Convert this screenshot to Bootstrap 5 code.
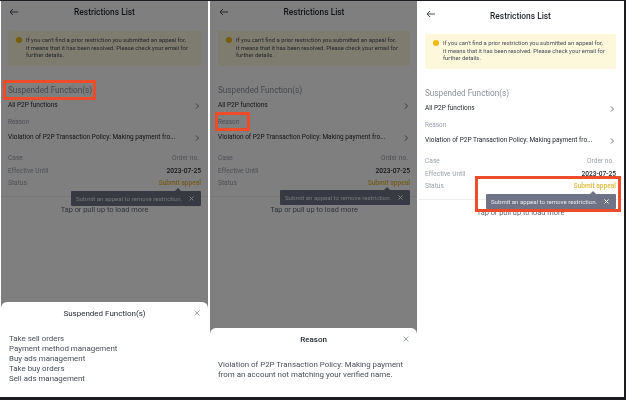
<!DOCTYPE html>
<html lang="en">
<head>
    <meta charset="UTF-8">
    <meta name="viewport" content="width=device-width, initial-scale=1.0">
    <title>Restrictions List</title>
    <link href="https://cdn.jsdelivr.net/npm/bootstrap@5.3.3/dist/css/bootstrap.min.css" rel="stylesheet">
    <style>
        html, body { height: 100%; }
        body {
            background: #1b1b22;
            overflow: hidden;
            font-family: "Roboto", "Noto Sans", sans-serif;
            color: #1e2329;
        }
        .shot-strip {
            width: 624px;
            height: 396px;
            margin-top: 1px;
            background: #fff;
            gap: 2px;
            filter: blur(.3px);
        }
        .phone {
            width: 207px;
            height: 100%;
            flex: none;
            background: #fff;
            padding: 2px 7px 0;
            overflow: hidden;
        }
        .phone-a { margin-left: 1px; }
        .phone-b { padding-left: 8px; }
        .phone-c { width: 205px; padding-top: 6px; margin-left: -1px; }
        .top-bar { height: 14px; line-height: 14px; margin-bottom: 14px; }
        .phone-c .top-bar { margin-bottom: 13px; }
        .top-bar svg { position: absolute; left: 1px; top: 5px; }
        .phone-c .top-bar svg { top: 3px; }
        .top-title { font-size: 8.4px; font-weight: 500; line-height: 14px; }
        .notice {
            background: #fdf8dc;
            border-radius: 2px;
            height: 35px;
            padding: 6px 8px 0 8px;
            font-size: 5.85px;
            line-height: 7.7px;
            color: #474d57;
            gap: 4px;
        }
        .notice-dot { width: 6px; height: 6px; border-radius: 50%; background: #f0b90b; flex: none; }
        .section-title { font-size: 8.2px; color: #8b929c; line-height: 10px; margin-top: 19px; }
        .item-row { font-size: 6.5px; line-height: 9px; margin-top: 6px; white-space: nowrap; }
        .item-row svg { margin-right: 2px; flex: none; }
        .sub-label { font-size: 6.4px; line-height: 9px; color: #9aa0aa; margin-top: 8px; }
        .row-case { margin-top: 12px; }
        .row-info { font-size: 6.6px; line-height: 9px; color: #9aa0aa; margin-bottom: 3.6px; }
        .row-info .val-dark { color: #1e2329; font-weight: 500; }
        .row-info .val-gold { color: #e0b93a; font-weight: 500; }
        .val-case { padding-right: 2px; }
        .hr-line { border-top: 1px solid #eaecef; margin: 8px -7px 0; }
        .load-more { font-size: 7.4px; line-height: 9px; color: #5e6673; margin-top: 8px; }
        .scrim { inset: 0; background: rgba(0, 0, 0, .5); z-index: 2; }
        .tip-box {
            right: 7px;
            width: 130px;
            height: 15px;
            background: #6e7386;
            color: #e6e8ee;
            border-radius: 1px;
            font-size: 6.1px;
            padding: 0 7px 0 5px;
            white-space: nowrap;
        }
        .tip-box::before {
            content: "";
            position: absolute;
            top: -3px;
            right: 20px;
            border-left: 3px solid transparent;
            border-right: 3px solid transparent;
            border-bottom: 3px solid #6e7386;
        }
        .tip-a { top: 190px; }
        .tip-b { top: 189px; }
        .tip-c { top: 193px; }
        .tip-dim { z-index: 1; }
        .sheet {
            left: 0;
            right: 0;
            bottom: 0;
            background: #fff;
            border-radius: 6px 6px 0 0;
            padding: 0 8px;
            z-index: 3;
        }
        .sheet-a { height: 95px; }
        .sheet-b { height: 69px; }
        .sheet-head { font-size: 8px; line-height: 10px; padding-top: 7px; }
        .sheet-b .sheet-head { font-weight: 500; }
        .sheet-head svg { position: absolute; right: 0; top: 8px; }
        .sheet-body { font-size: 7.9px; line-height: 10px; color: #474d57; margin-top: 15px; }
        .red-box { border: 3px solid #ee4b2b; z-index: 4; }
        .red-a { left: 2px; top: 79px; width: 93px; height: 20px; }
        .red-b { left: 5px; top: 111px; width: 35px; height: 19px; }
        .red-c { left: 57px; top: 175px; width: 146px; height: 36px; }
    </style>
</head>
<body>
    <div class="shot-strip d-flex">

        <!-- left screen -->
        <div class="phone phone-a position-relative">
            <div class="position-relative top-bar text-center">
                <svg width="9" height="8" viewBox="0 0 9 8" fill="none" stroke="#474d57" stroke-width="1"><path d="M9 4H1M4 1L1 4l3 3"/></svg>
                <span class="top-title">Restrictions List</span>
            </div>
            <div class="notice d-flex">
                <span class="notice-dot"></span>
                <div>If you can't find a prior restriction you submitted an appeal for,<br>it means that it has been resolved. Please check your email for<br>further details.</div>
            </div>
            <div class="section-title">Suspended Function(s)</div>
            <div class="item-row d-flex justify-content-between align-items-center">
                <span>All P2P functions</span>
                <svg width="4" height="6" viewBox="0 0 4 6" fill="none" stroke="#474d57" stroke-width=".8"><path d="M1 .5L3.5 3 1 5.5"/></svg>
            </div>
            <div class="sub-label">Reason</div>
            <div class="item-row d-flex justify-content-between align-items-center">
                <span>Violation of P2P Transaction Policy: Making payment fro...</span>
                <svg width="4" height="6" viewBox="0 0 4 6" fill="none" stroke="#474d57" stroke-width=".8"><path d="M1 .5L3.5 3 1 5.5"/></svg>
            </div>
            <div class="row-info row-case d-flex justify-content-between"><span>Case</span><span class="val-case">Order no.</span></div>
            <div class="row-info d-flex justify-content-between"><span>Effective Until</span><span class="val-dark">2023-07-25</span></div>
            <div class="row-info d-flex justify-content-between mb-0"><span>Status</span><span class="val-gold">Submit appeal</span></div>
            <div class="hr-line"></div>
            <div class="load-more text-center">Tap or pull up to load more</div>

            <div class="tip-box tip-a tip-dim position-absolute d-flex justify-content-between align-items-center">
                <span>Submit an appeal to remove restriction.</span>
                <svg width="5" height="5" viewBox="0 0 5 5" stroke="#fff" stroke-width="1"><path d="M.5.5l4 4M4.5.5l-4 4"/></svg>
            </div>
            <div class="scrim position-absolute"></div>
            <div class="sheet sheet-a position-absolute">
                <div class="sheet-head position-relative text-center">
                    Suspended Function(s)
                    <svg width="6" height="6" viewBox="0 0 6 6" stroke="#8b929c" stroke-width=".8"><path d="M.5.5l5 5M5.5.5l-5 5"/></svg>
                </div>
                <div class="sheet-body">
                    <div>Take sell orders</div>
                    <div>Payment method management</div>
                    <div>Buy ads management</div>
                    <div>Take buy orders</div>
                    <div>Sell ads management</div>
                </div>
            </div>
            <div class="red-box red-a position-absolute"></div>
        </div>

        <!-- middle screen -->
        <div class="phone phone-b position-relative">
            <div class="position-relative top-bar text-center">
                <svg width="9" height="8" viewBox="0 0 9 8" fill="none" stroke="#474d57" stroke-width="1"><path d="M9 4H1M4 1L1 4l3 3"/></svg>
                <span class="top-title">Restrictions List</span>
            </div>
            <div class="notice d-flex">
                <span class="notice-dot"></span>
                <div>If you can't find a prior restriction you submitted an appeal for,<br>it means that it has been resolved. Please check your email for<br>further details.</div>
            </div>
            <div class="section-title">Suspended Function(s)</div>
            <div class="item-row d-flex justify-content-between align-items-center">
                <span>All P2P functions</span>
                <svg width="4" height="6" viewBox="0 0 4 6" fill="none" stroke="#474d57" stroke-width=".8"><path d="M1 .5L3.5 3 1 5.5"/></svg>
            </div>
            <div class="sub-label">Reason</div>
            <div class="item-row d-flex justify-content-between align-items-center">
                <span>Violation of P2P Transaction Policy: Making payment fro...</span>
                <svg width="4" height="6" viewBox="0 0 4 6" fill="none" stroke="#474d57" stroke-width=".8"><path d="M1 .5L3.5 3 1 5.5"/></svg>
            </div>
            <div class="row-info row-case d-flex justify-content-between"><span>Case</span><span class="val-case">Order no.</span></div>
            <div class="row-info d-flex justify-content-between"><span>Effective Until</span><span class="val-dark">2023-07-25</span></div>
            <div class="row-info d-flex justify-content-between mb-0"><span>Status</span><span class="val-gold">Submit appeal</span></div>
            <div class="hr-line"></div>
            <div class="load-more text-center">Tap or pull up to load more</div>

            <div class="tip-box tip-b tip-dim position-absolute d-flex justify-content-between align-items-center">
                <span>Submit an appeal to remove restriction.</span>
                <svg width="5" height="5" viewBox="0 0 5 5" stroke="#fff" stroke-width="1"><path d="M.5.5l4 4M4.5.5l-4 4"/></svg>
            </div>
            <div class="scrim position-absolute"></div>
            <div class="sheet sheet-b position-absolute">
                <div class="sheet-head position-relative text-center">
                    Reason
                    <svg width="6" height="6" viewBox="0 0 6 6" stroke="#8b929c" stroke-width=".8"><path d="M.5.5l5 5M5.5.5l-5 5"/></svg>
                </div>
                <div class="sheet-body">Violation of P2P Transaction Policy: Making payment from an account not matching your verified name.</div>
            </div>
            <div class="red-box red-b position-absolute"></div>
        </div>

        <!-- right screen -->
        <div class="phone phone-c position-relative">
            <div class="position-relative top-bar text-center">
                <svg width="9" height="8" viewBox="0 0 9 8" fill="none" stroke="#474d57" stroke-width="1"><path d="M9 4H1M4 1L1 4l3 3"/></svg>
                <span class="top-title">Restrictions List</span>
            </div>
            <div class="notice d-flex">
                <span class="notice-dot"></span>
                <div>If you can't find a prior restriction you submitted an appeal for,<br>it means that it has been resolved. Please check your email for<br>further details.</div>
            </div>
            <div class="section-title">Suspended Function(s)</div>
            <div class="item-row d-flex justify-content-between align-items-center">
                <span>All P2P functions</span>
                <svg width="4" height="6" viewBox="0 0 4 6" fill="none" stroke="#474d57" stroke-width=".8"><path d="M1 .5L3.5 3 1 5.5"/></svg>
            </div>
            <div class="sub-label">Reason</div>
            <div class="item-row d-flex justify-content-between align-items-center">
                <span>Violation of P2P Transaction Policy: Making payment fro...</span>
                <svg width="4" height="6" viewBox="0 0 4 6" fill="none" stroke="#474d57" stroke-width=".8"><path d="M1 .5L3.5 3 1 5.5"/></svg>
            </div>
            <div class="row-info row-case d-flex justify-content-between"><span>Case</span><span class="val-case">Order no.</span></div>
            <div class="row-info d-flex justify-content-between"><span>Effective Until</span><span class="val-dark">2023-07-25</span></div>
            <div class="row-info d-flex justify-content-between mb-0"><span>Status</span><span class="val-gold">Submit appeal</span></div>
            <div class="hr-line"></div>
            <div class="load-more text-center">Tap or pull up to load more</div>

            <div class="tip-box tip-c position-absolute d-flex justify-content-between align-items-center">
                <span>Submit an appeal to remove restriction.</span>
                <svg width="5" height="5" viewBox="0 0 5 5" stroke="#fff" stroke-width="1"><path d="M.5.5l4 4M4.5.5l-4 4"/></svg>
            </div>
            <div class="red-box red-c position-absolute"></div>
        </div>

    </div>
    <script src="https://cdn.jsdelivr.net/npm/bootstrap@5.3.3/dist/js/bootstrap.bundle.min.js"></script>
</body>
</html>
